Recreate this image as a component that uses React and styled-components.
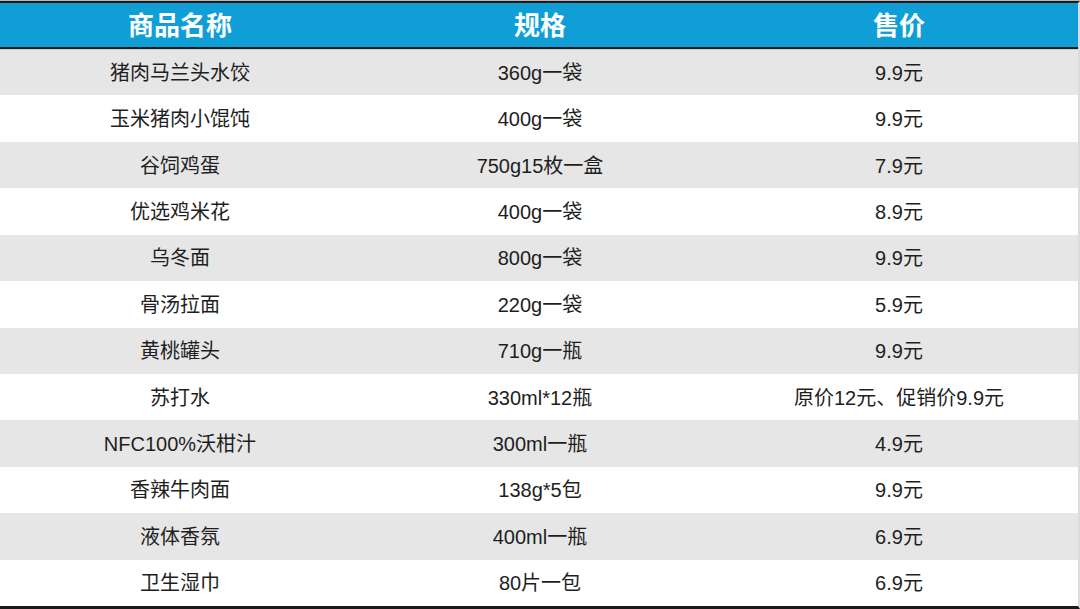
import React from "react";
import styled, { createGlobalStyle } from "styled-components";

const Global = createGlobalStyle`
  html, body { margin: 0; padding: 0; background: #ffffff; }
  body { font-family: "Liberation Sans", "Noto Sans CJK SC", sans-serif; }
`;

const Frame = styled.div`
  width: 1080px;
  height: 609px;
  box-sizing: border-box;
  border-top: 1px solid #b8b8b8;
  display: flex;
  flex-direction: column;
  background: #ffffff;
`;

const Table = styled.div`
  flex: 1;
  display: grid;
  grid-template-rows: 46px repeat(12, 1fr);
  border-top: 2px solid #1a1a1a;
  border-bottom: 3px solid #1a1a1a;
  border-right: 2px solid #dcdcdc;
`;

const Row = styled.div`
  display: grid;
  grid-template-columns: 360px 360px 1fr;
  align-items: center;
  background: ${(p) => (p.$shaded ? "#e6e6e6" : "#ffffff")};
`;

const HeadRow = styled(Row)`
  background: #0f9fd6;
  border-bottom: 2px solid #1a1a1a;
  box-shadow: 0 1px 0 #cfcfcf;
  position: relative;
  z-index: 1;
`;

const HeadCell = styled.div`
  text-align: center;
  color: #ffffff;
  font-weight: 700;
  font-size: 26px;
  line-height: 1;
  padding-top: 1px;
`;

const Cell = styled.div`
  text-align: center;
  color: #1e1e1e;
  font-size: 20px;
  line-height: 1;
  padding-top: 1px;
`;

const rows = [
  ["猪肉马兰头水饺", "360g一袋", "9.9元"],
  ["玉米猪肉小馄饨", "400g一袋", "9.9元"],
  ["谷饲鸡蛋", "750g15枚一盒", "7.9元"],
  ["优选鸡米花", "400g一袋", "8.9元"],
  ["乌冬面", "800g一袋", "9.9元"],
  ["骨汤拉面", "220g一袋", "5.9元"],
  ["黄桃罐头", "710g一瓶", "9.9元"],
  ["苏打水", "330ml*12瓶", "原价12元、促销价9.9元"],
  ["NFC100%沃柑汁", "300ml一瓶", "4.9元"],
  ["香辣牛肉面", "138g*5包", "9.9元"],
  ["液体香氛", "400ml一瓶", "6.9元"],
  ["卫生湿巾", "80片一包", "6.9元"],
];

export default function App() {
  return (
    <>
      <Global />
      <Frame>
        <Table>
          <HeadRow>
            <HeadCell>商品名称</HeadCell>
            <HeadCell>规格</HeadCell>
            <HeadCell>售价</HeadCell>
          </HeadRow>
          {rows.map((r, i) => (
            <Row key={i} $shaded={i % 2 === 0}>
              <Cell>{r[0]}</Cell>
              <Cell>{r[1]}</Cell>
              <Cell>{r[2]}</Cell>
            </Row>
          ))}
        </Table>
      </Frame>
    </>
  );
}
